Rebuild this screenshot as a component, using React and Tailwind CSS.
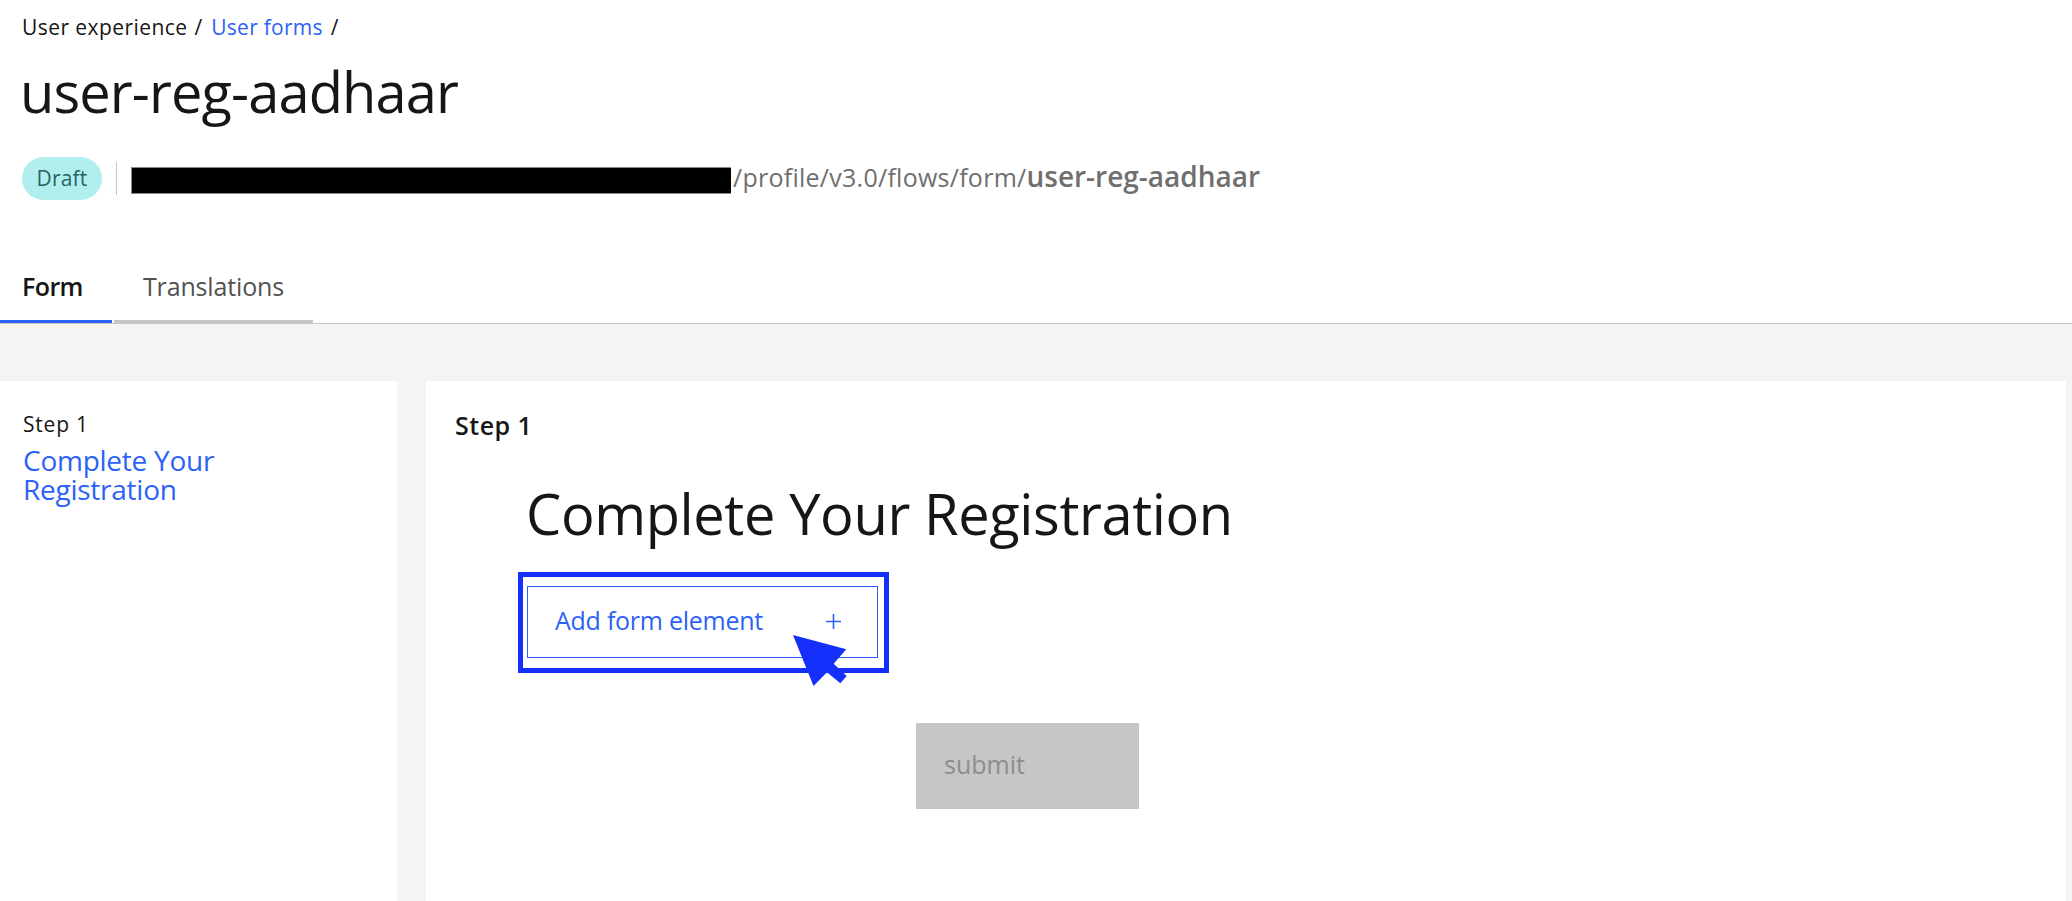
import { useState } from 'react';

const tabs = [
    { id: 'form', label: 'Form', size: 'w-28 pl-[22px]', spacing: 'tracking-[-0.6px]' },
    { id: 'translations', label: 'Translations', size: 'w-[199px] pl-[29px]', spacing: 'tracking-[-0.15px]' },
];

function Header() {
    return (
        <header className="pl-[22px] pt-3">
            <nav className="flex h-[30px] text-[21px] leading-[30px]">
                <span className="tracking-[0.44px]">User experience</span>
                <span className="ml-[7px]">/</span>
                <a href="#" className="ml-[9px] text-[#2c62f6] tracking-[0.25px]">User forms</a>
                <span className="ml-2">/</span>
            </nav>
            <h1 className="mt-[17px] -ml-[2px] text-[56px] leading-[64px] tracking-[-0.88px]">user-reg-aadhaar</h1>
            <div className="mt-[34px] flex h-[43px] items-center">
                <span className="flex h-[43px] w-20 items-center justify-center rounded-full bg-[#b1efee] text-[21px] text-[#2b5f63] tracking-[0.2px]">
                    Draft
                </span>
                <div className="ml-[14px] h-[33px] w-px bg-[#c6c6c6]" />
                {/* Redacted host name */}
                <div className="ml-[14px] mt-1 h-[27px] w-[600px] border-y border-l border-[#888888] bg-black" />
                <div className="ml-[2px] -mt-[5px] flex items-baseline leading-9 text-[#6f6f6f]">
                    <span className="text-[25px] tracking-[0.26px]">/profile/v3.0/flows/form/</span>
                    <span className="text-[28px] font-semibold">user-reg-aadhaar</span>
                </div>
            </div>
        </header>
    );
}

function Tabs({ active, onChange = () => {} }) {
    return (
        <div className="mt-[60px] flex h-16 gap-[2px] border-b border-[#c6c6c6]">
            {tabs.map(({ id, label, size, spacing }) => (
                <button
                    key={id}
                    onClick={() => onChange(id)}
                    className={`h-[63px] pt-[9px] text-left text-[25px] leading-[34px] flex items-start border-b-[3px] ${size} ${spacing} ${active === id ? 'font-semibold text-[#161616] border-[#2c62f6]' : 'text-[#525252] border-[#c6c6c6]'}`}
                >
                    {label}
                </button>
            ))}
        </div>
    );
}

function Pointer() {
    return (
        <svg className="absolute left-[270px] top-[58px] h-[52px] w-[54px]" viewBox="0 0 54 52" fill="#1430fa">
            <path d="M0 0 L53.3 14.3 L40.7 28.8 L53.7 41 L47.3 48.3 L34 37.3 L20.5 51 Z" />
        </svg>
    );
}

function AddElement() {
    return (
        <div className="relative ml-[92px] h-[101px] w-[371px] border-[5px] border-[#1430fa] pl-1 pt-[9px]">
            <button className="flex h-[72px] w-[351px] items-center border border-[#2c62f6] pl-[27px] text-[25px] text-[#2c62f6]">
                <span className="-mt-[2px] w-[271px] text-left tracking-[-0.25px]">Add form element</span>
                <svg className="-mt-[1px] h-[15px] w-[15px]" viewBox="0 0 15 15" stroke="currentColor" strokeWidth="1.6">
                    <path d="M7.5 0V15M0 7.5H15" />
                </svg>
            </button>
            <Pointer />
        </div>
    );
}

function App() {
    const [tab, setTab] = useState('form');

    return (
        <div className="flex h-screen w-full flex-col overflow-hidden bg-white font-['Open_Sans',sans-serif] text-[#161616]">
            <Header />
            <Tabs active={tab} onChange={setTab} />
            <main className="flex flex-1 gap-[29px] bg-[#f4f4f4] pr-[6px] pt-[57px]">
                {/* Steps */}
                <aside className="w-[397px] bg-white pl-[23px] pt-7">
                    <p className="text-[21px] leading-[30px] tracking-[0.8px]">Step 1</p>
                    <a href="#" className="mt-[7px] block w-[220px] text-[28px] leading-[29px] text-[#2c62f6] tracking-[-0.25px]">
                        Complete Your Registration
                    </a>
                </aside>
                {/* Form preview */}
                <section className="flex-1 bg-white pt-[27px]">
                    <h2 className="pl-[29px] text-[25px] font-semibold leading-[34px] tracking-[0.5px]">Step 1</h2>
                    <h3 className="mt-[39px] pl-[100px] text-[56px] leading-[64px] tracking-[-0.38px]">Complete Your Registration</h3>
                    <div className="mt-[27px]">
                        <AddElement />
                    </div>
                    <button
                        disabled
                        className="ml-[490px] mt-[50px] block h-[86px] w-[223px] bg-[#c6c6c6] pb-[2px] pl-7 text-left text-[25px] text-[#8d8d8d]"
                    >
                        submit
                    </button>
                </section>
            </main>
        </div>
    );
}

export default App;
